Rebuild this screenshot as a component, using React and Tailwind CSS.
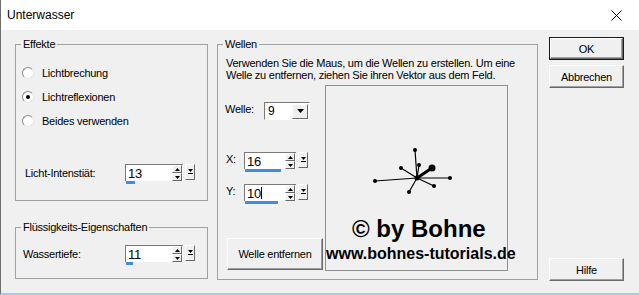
import React from "react";

function Raised({ className = "", children }) {
  return (
    <div
      className={
        "bg-[#f0f0f0] border border-t-white border-l-white border-r-[#696969] border-b-[#696969] flex items-center justify-center " +
        className
      }
    >
      {children}
    </div>
  );
}

function Button({ label, className = "", isDefault }) {
  const inner = (
    <div className="w-full h-full bg-[#f0f0f0] border border-t-white border-l-white border-r-[#696969] border-b-[#696969] shadow-[inset_-1px_-1px_0_#a0a0a0] flex items-center justify-center">
      {label}
    </div>
  );
  if (isDefault) {
    return <div className={"border border-[#1a1a1a] " + className}>{inner}</div>;
  }
  return <div className={className}>{inner}</div>;
}

function Radio({ label, checked }) {
  return (
    <div className="flex items-center h-[12px]">
      <span className="w-[12px] h-[12px] shrink-0 rounded-full bg-white border border-t-[#8a8a8a] border-l-[#8a8a8a] border-r-[#e6e6e6] border-b-[#e6e6e6] flex items-center justify-center">
        {checked && <span className="w-[4px] h-[4px] rounded-full bg-black" />}
      </span>
      <span className="ml-[8px] whitespace-nowrap">{label}</span>
    </div>
  );
}

function Up() {
  return (
    <svg width="5" height="3" viewBox="0 0 5 3">
      <polygon points="2.5,0 5,3 0,3" fill="#000" />
    </svg>
  );
}
function Down() {
  return (
    <svg width="5" height="3" viewBox="0 0 5 3">
      <polygon points="0,0 5,0 2.5,3" fill="#000" />
    </svg>
  );
}

function Spin({ value, textW, barW, cursor }) {
  return (
    <div className="flex items-start">
      <div className="flex flex-col">
        <div className="flex h-[17px] bg-white border-t border-l border-t-[#7a7a7a] border-l-[#7a7a7a]">
          <div
            className={
              "flex items-center pl-[2px] font-['Liberation_Sans_Narrow','Liberation_Sans',Arial,sans-serif] text-[13px] leading-[13px] tracking-[-0.3px] " +
              textW
            }
          >
            <span>{value}</span>
            {cursor && <span className="w-[1px] h-[12px] bg-black" />}
          </div>
          <div className="flex flex-col pr-[1px]">
            <Raised className="w-[10px] h-[8px]">
              <Up />
            </Raised>
            <Raised className="w-[10px] h-[8px]">
              <Down />
            </Raised>
          </div>
        </div>
        <div className="h-[3px] pl-[1px] flex">
          <div className={"h-[3px] bg-[#3d8ee2] " + barW} />
        </div>
      </div>
      <Raised className="ml-[2px] w-[10px] h-[16px]">
        <svg width="5" height="6" viewBox="0 0 5 6">
          <polygon points="0,0 5,0 2.5,3" fill="#000" />
          <rect x="0" y="4" width="5" height="1" fill="#000" />
        </svg>
      </Raised>
    </div>
  );
}

function Dropdown() {
  return (
    <div className="w-[46px] h-[18px] bg-white border-t border-l border-t-[#7a7a7a] border-l-[#7a7a7a] border-r border-b border-r-white border-b-white flex items-center">
      <span className="flex-1 pl-[3px] text-[12px] leading-[12px]">9</span>
      <Raised className="w-[16px] h-[15px] mr-[1px]">
        <svg width="7" height="4" viewBox="0 0 7 4">
          <polygon points="0,0 7,0 3.5,4" fill="#000" />
        </svg>
      </Raised>
    </div>
  );
}

function Star() {
  const c = [91, 92];
  const ends = [
    [89, 64],
    [49, 95],
    [124, 92],
    [75, 82],
    [108, 100],
    [83, 106],
    [93, 79],
  ];
  return (
    <svg width="181" height="184" viewBox="0 0 181 184">
      {ends.map(([x, y], i) => (
        <g key={i}>
          <line x1={c[0]} y1={c[1]} x2={x} y2={y} stroke="#000" strokeWidth="1.2" />
          <circle cx={x} cy={y} r="2" fill="#000" />
        </g>
      ))}
      <line x1={c[0]} y1={c[1]} x2="106" y2="82" stroke="#000" strokeWidth="3" />
      <circle cx="106" cy="82" r="3.5" fill="#000" />
      <circle cx={c[0]} cy={c[1]} r="2.5" fill="#000" />
    </svg>
  );
}

export default function App() {
  return (
    <div className="w-[639px] h-[295px] bg-[#f0f0f0] flex flex-col overflow-hidden border-l border-l-[#6e6e6e] border-b-2 border-b-[#a9c8ea] text-black font-['Liberation_Sans',Arial,sans-serif]">
      <div className="h-[30px] shrink-0 bg-white flex items-center justify-between">
        <span className="pl-[6px] text-[12px] leading-[12px]">Unterwasser</span>
        <div className="w-[46px] h-[30px] flex items-center justify-center">
          <svg width="11" height="11" viewBox="0 0 11 11">
            <path d="M0.5 0.5 L10.5 10.5 M10.5 0.5 L0.5 10.5" stroke="#000" strokeWidth="1" />
          </svg>
        </div>
      </div>

      <div className="relative flex flex-1 text-[11px] leading-[12px] tracking-[-0.25px]">
        {/* left column */}
        <div className="ml-[14px] mt-[8px] w-[193px] flex flex-col shrink-0">
          <fieldset className="h-[163px] border border-[#a0a0a0]">
            <legend className="ml-[5px] px-[2px] leading-[12px]">Effekte</legend>
            <div className="pt-[17px] pl-[6px] flex flex-col gap-[12px]">
              <Radio label="Lichtbrechung" />
              <Radio label="Lichtreflexionen" checked />
              <Radio label="Beides verwenden" />
            </div>
            <div className="mt-[37px] flex items-start">
              <div className="w-[109px] pl-[9px] mt-[3px] whitespace-nowrap">Licht-Intenstiät:</div>
              <Spin value="13" textW="w-[46px]" barW="w-[9px]" />
            </div>
          </fieldset>

          <fieldset className="mt-[20px] h-[58px] border border-[#a0a0a0]">
            <legend className="ml-[5px] px-[2px] leading-[12px]">Flüssigkeits-Eigenschaften</legend>
            <div className="pt-[12px] flex items-start">
              <div className="w-[109px] pl-[7px] mt-[3px] whitespace-nowrap">Wassertiefe:</div>
              <Spin value="11" textW="w-[46px]" barW="w-[7px]" />
            </div>
          </fieldset>
        </div>

        {/* Wellen */}
        <fieldset className="ml-[9px] mt-[8px] w-[321px] h-[242px] shrink-0 border border-[#a0a0a0]">
          <legend className="ml-[5px] px-[2px] leading-[12px]">Wellen</legend>
          <div className="pt-[7px] pl-[8px] whitespace-nowrap">
            Verwenden Sie die Maus, um die Wellen zu erstellen. Um eine
            <br />
            Welle zu entfernen, ziehen Sie ihren Vektor aus dem Feld.
          </div>
          <div className="mt-[4px] flex">
            <div className="w-[107px] flex flex-col shrink-0">
              <div className="mt-[17px] pl-[7px] flex items-start">
                <span className="w-[39px] mt-[1px]">Welle:</span>
                <Dropdown />
              </div>
              <div className="mt-[32px] pl-[8px] flex items-start">
                <span className="w-[18px] mt-[1px]">X:</span>
                <Spin value="16" textW="w-[40px]" barW="w-[36px]" />
              </div>
              <div className="mt-[12px] pl-[8px] flex items-start">
                <span className="w-[18px] mt-[1px]">Y:</span>
                <Spin value="10" textW="w-[40px]" barW="w-[33px]" cursor />
              </div>
              <Button label="Welle entfernen" className="mt-[34px] ml-[9px] w-[96px] h-[32px]" />
            </div>
            <div className="w-[183px] h-[186px] border border-[#8f8f8f] shrink-0">
              <Star />
            </div>
          </div>
        </fieldset>

        {/* right buttons */}
        <div className="ml-[11px] mt-[7px] flex flex-col w-[75px] shrink-0">
          <Button label="OK" isDefault className="w-[75px] h-[23px]" />
          <Button label="Abbrechen" className="mt-[5px] w-[75px] h-[23px]" />
          <Button label="Hilfe" className="mt-[170px] w-[75px] h-[23px]" />
        </div>

        {/* watermark overlay */}
        <div className="absolute left-[351px] top-[187px] text-[24px] leading-[24px] font-bold tracking-normal whitespace-nowrap">
          © by Bohne
        </div>
        <div className="absolute left-[325px] top-[216px] text-[16px] leading-[16px] font-bold tracking-normal whitespace-nowrap">
          www.bohnes-tutorials.de
        </div>
      </div>
    </div>
  );
}
